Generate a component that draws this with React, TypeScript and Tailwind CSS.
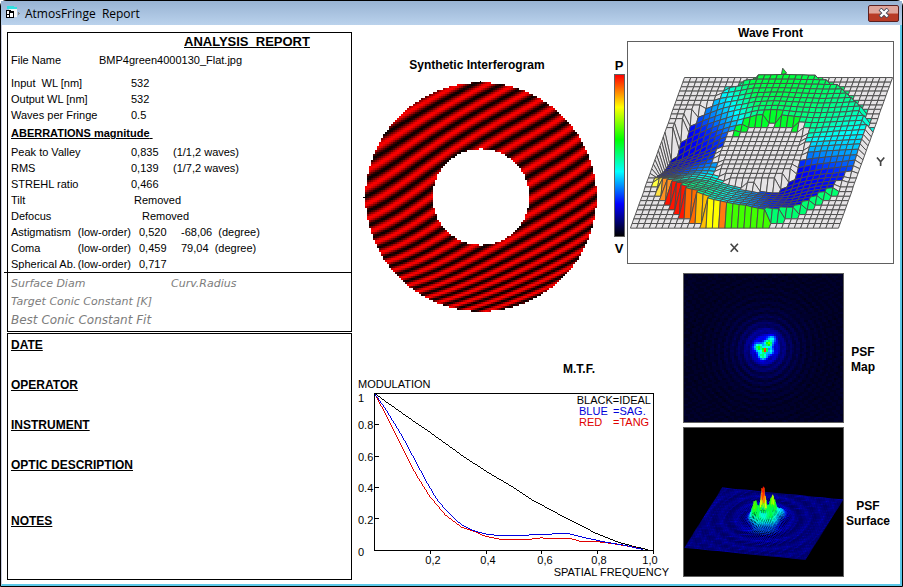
import type { ReactNode } from "react";

interface Row {
  label: string;
  order?: string;
  value: string;
  extra?: string;
  indent?: string;
}

const SETUP_ROWS: Row[] = [
  { label: "Input  WL [nm]", value: "532" },
  { label: "Output WL [nm]", value: "532" },
  { label: "Waves per Fringe", value: "0.5" },
];

const ABERRATION_ROWS: Row[] = [
  { label: "Peak to Valley", value: "0,835", extra: "(1/1,2 waves)" },
  { label: "RMS", value: "0,139", extra: "(1/7,2 waves)" },
  { label: "STREHL ratio", value: "0,466" },
  { label: "Tilt", value: "Removed", indent: "pl-[3px]" },
  { label: "Defocus", value: "Removed", indent: "pl-[11px]" },
  { label: "Astigmatism", order: "(low-order)", value: "0,520", extra: "-68,06  (degree)", indent: "pl-2" },
  { label: "Coma", order: "(low-order)", value: "0,459", extra: "79,04  (degree)", indent: "pl-2" },
  { label: "Spherical Ab.", order: "(low-order)", value: "0,717", indent: "pl-2" },
];

const NOTE_FIELDS = [
  { name: "DATE", height: "h-10" },
  { name: "OPERATOR", height: "h-10" },
  { name: "INSTRUMENT", height: "h-10" },
  { name: "OPTIC DESCRIPTION", height: "h-14" },
  { name: "NOTES", height: "h-10" },
];

type Rgb = [number, number, number];

// valley -> peak
const SCALE: [number, Rgb][] = [
  [0, [0, 0, 20]],
  [0.2, [0, 0, 255]],
  [0.4, [0, 255, 255]],
  [0.6, [0, 255, 0]],
  [0.8, [255, 255, 0]],
  [1, [255, 0, 0]],
];

function heat(v: number): string {
  const x = Math.min(1, Math.max(0, v));
  for (let i = 1; i < SCALE.length; i++) {
    const [b, cb] = SCALE[i];
    if (x <= b) {
      const [a, ca] = SCALE[i - 1];
      const k = (x - a) / (b - a);
      const mix = ca.map((c, j) => Math.round(c + (cb[j] - c) * k));
      return `rgb(${mix.join(",")})`;
    }
  }
  return "rgb(255,0,0)";
}

// Collects square pixels into one path per colour, merging runs on each row
function raster(cols: number, rows: number, size: number, color: (x: number, y: number) => string | null) {
  const paths = new Map<string, string>();
  for (let j = 0; j < rows; j++) {
    let start = 0;
    let current = color(0, j);
    for (let i = 1; i <= cols; i++) {
      const next = i < cols ? color(i, j) : null;
      if (next !== current || i === cols) {
        if (current) {
          const d = `M${start * size} ${j * size}h${(i - start) * size}v${size}h${(start - i) * size}z`;
          paths.set(current, (paths.get(current) ?? "") + d);
        }
        start = i;
        current = next;
      }
    }
  }
  return [...paths.entries()];
}

function fringeOrder(u: number, v: number) {
  const r2 = u * u + v * v;
  const tilt = 7.1 * v + 4.5 * u;
  const astigmatism = 0.6 * v * v + 0.4 * u * v - 0.6 * u * u;
  const coma = 1.5 * v * v * v + 0.4 * u * u * v;
  return tilt + astigmatism + coma + 0.6 * r2 * r2 + 0.03;
}

const FRINGES = raster(118, 117, 2, (i, j) => {
  const x = i * 2 + 1 - 118;
  const y = j * 2 + 1 - 117;
  const r = Math.hypot(x, y * 1.01);
  if (r > 115.5 || r < 48.5) return null;
  const level = 0.5 + 0.5 * Math.cos(2 * Math.PI * fringeOrder(x / 115.5, y / 114.5));
  return `rgb(${Math.round(Math.pow(level, 0.9) * 16) * 15 + 10},0,0)`;
});

function Interferogram() {
  return (
    <svg width="236" height="234" viewBox="0 0 236 234" shapeRendering="crispEdges" className="ml-2">
      {FRINGES.map(([fill, d]) => (
        <path key={fill} d={d} fill={fill} />
      ))}
      <path d="M117 1h1v2h-1zM0 117h3v1h-3z" fill="#000" />
    </svg>
  );
}

// angle, outer height, inner height, outer colour, inner colour
const PROFILE: [number, number, number, number, number][] = [
  [0, 20, 12, 0.36, 0.33],
  [30, 25, 10, 0.46, 0.48],
  [60, 20, 20, 0.52, 0.5],
  [90, 22, 28, 0.56, 0.5],
  [110, 22, 25, 0.55, 0.48],
  [130, 5, 10, 0.36, 0.4],
  [150, -43, 5, 0.19, 0.3],
  [165, -88, 0, 0.16, 0.25],
  [180, -62, -5, 0.16, 0.27],
  [200, 0, -10, 0.22, 0.37],
  [215, 50, -12, 0.42, 0.39],
  [230, 80, -14, 0.52, 0.39],
  [245, 85, -16, 0.5, 0.38],
  [260, 73, -18, 0.42, 0.36],
  [275, 61, -22, 0.34, 0.3],
  [290, 37, -32, 0.22, 0.24],
  [305, 20, -40, 0.19, 0.18],
  [320, 18, -30, 0.2, 0.17],
  [340, 4, -10, 0.22, 0.2],
  [360, 20, 12, 0.36, 0.33],
];

const WALLS: [number, string][] = [
  [206, "#ffff40"],
  [213, "#ffe040"],
  [220, "#ff9020"],
  [240, "#ff1400"],
  [248, "#ff6a00"],
  [254, "#ffc000"],
  [260, "#ffff00"],
  [264, "#ff7a10"],
  [288, "#40ff00"],
  [330, "#00ff70"],
];

const N = 33;

function surfaceAt(s: number, t: number) {
  const dx = s - 0.5;
  const dy = t - 0.5;
  const r = Math.hypot(dx, dy);
  const angle = ((Math.atan2(-dy, dx) * 180) / Math.PI + 360) % 360;
  const inside = r < 0.49 && r > 0.2;
  const i = Math.max(1, PROFILE.findIndex((p) => p[0] >= angle));
  const a = PROFILE[i - 1];
  const b = PROFILE[i];
  const k = (angle - a[0]) / (b[0] - a[0]);
  const w = Math.min(1, Math.max(0, (r - 0.2) / 0.29));
  const outer = a[1] + (b[1] - a[1]) * k;
  const inner = a[2] + (b[2] - a[2]) * k;
  const outerColor = a[3] + (b[3] - a[3]) * k;
  const innerColor = a[4] + (b[4] - a[4]) * k;
  const z = inside ? inner + (outer - inner) * w : 0;
  return { r, angle, inside, z, tone: innerColor + (outerColor - innerColor) * Math.pow(w, 0.6) };
}

function surfaceQuads() {
  const quads: { points: string; fill: string }[] = [];
  for (let j = 0; j < N; j++) {
    for (let i = 0; i < N; i++) {
      const corners = [
        [i, j],
        [i + 1, j],
        [i + 1, j + 1],
        [i, j + 1],
      ].map(([a, b]) => ({ s: a / N, t: b / N, ...surfaceAt(a / N, b / N) }));
      const points = corners
        .map((c) => `${Math.round(170 + 627 * c.s - 163 * c.t)},${Math.round(107 + 454 * c.t - c.z)}`)
        .join(" ");
      const on = corners.filter((c) => c.inside);
      const mid = surfaceAt((i + 0.5) / N, (j + 0.5) / N);
      let fill = "#e6e4e6";
      if (on.length === 4) {
        fill = heat(mid.tone);
      } else if (on.length > 0 && mid.r > 0.4) {
        if (mid.angle > 200 && mid.angle < 330) {
          fill = WALLS.find((w) => mid.angle <= w[0])?.[1] ?? fill;
        } else if (mid.angle < 125 && mid.angle > 15) {
          fill = heat(mid.tone);
        }
      } else if (on.length > 0 && mid.angle > 45 && mid.angle < 145) {
        fill = "#00ff2a";
      }
      quads.push({ points, fill });
    }
  }
  return quads;
}

const QUADS = surfaceQuads();

function WaveFront() {
  return (
    <svg viewBox="0 0 798 666" className="block h-[221px] w-full">
      <g stroke="#4a4a4a" strokeWidth="2.8" strokeLinejoin="round">
        <polygon points="462,98 466,79 478,94" fill="#00ff2a" />
        {QUADS.map((q, i) => (
          <polygon key={i} points={q.points} fill={q.fill} />
        ))}
      </g>
      <path d="M309 608l22 24m0-24l-22 24" stroke="#444" strokeWidth="5" />
      <path d="M750 348l11 13l11-13m-11 13v13" stroke="#444" strokeWidth="5" fill="none" />
    </svg>
  );
}

const LOBES = [
  { x: 0, y: 0, a: 0.75, s: 5 },
  { x: -20, y: -8, a: 0.42, s: 8 },
  { x: 11, y: -20, a: 0.45, s: 8 },
  { x: -7, y: 17, a: 0.34, s: 9 },
  { x: 22, y: -35, a: 0.2, s: 8 },
  { x: 19, y: 5, a: 0.2, s: 6 },
  { x: 0, y: -8, a: 0.16, s: 32 },
  { x: 0, y: -6, a: 0.05, s: 75 },
];

function psf(x: number, y: number) {
  let v = 0;
  for (const l of LOBES) {
    v += l.a * Math.exp(-((x - l.x) ** 2 + (y - l.y) ** 2) / (2 * l.s * l.s));
  }
  const r = Math.hypot(x, y);
  const ring = Math.cos(r / 3.2 + 0.8 * Math.sin(Math.atan2(y, x) * 2 + 0.6));
  const speckle = Math.sin(x * 0.21 + y * 0.05) * Math.sin(y * 0.33 - x * 0.04);
  return v + 0.014 + 0.04 * ring * Math.exp(-r / 90) + 0.008 * speckle;
}

const PSF_PIXELS = raster(80, 74, 2, (i, j) => {
  const v = psf((i * 2 + 1 - 81) * 3, (j * 2 + 1 - 76) * 3);
  return heat(Math.round(Math.max(0, v) * 100) / 100);
});

function PsfMap() {
  return (
    <svg viewBox="0 0 159 148" shapeRendering="crispEdges" className="block h-full w-full bg-[#000028]">
      {PSF_PIXELS.map(([fill, d]) => (
        <path key={fill} d={d} fill={fill} />
      ))}
    </svg>
  );
}

const PEAKS = [
  { x: 236, y: 68, s: 5, h: 34 },
  { x: 238, y: 74, s: 7, h: 60 },
  { x: 213, y: 79, s: 8, h: 50 },
  { x: 266, y: 70, s: 8, h: 54 },
  { x: 225, y: 98, s: 10, h: 22 },
  { x: 258, y: 92, s: 12, h: 28 },
  { x: 292, y: 66, s: 10, h: 20 },
  { x: 240, y: 84, s: 32, h: 18 },
];

function surfaceLines() {
  const groups = new Map<string, string>();
  const rows = 58;
  const cols = 120;
  const at = (i: number, j: number) => {
    const s = i / cols;
    const t = j / rows;
    const x = 114 + 363 * s - 112 * t;
    const y = 180 + 36 * s + 178 * t;
    let h = 0;
    for (const p of PEAKS) {
      h += p.h * Math.exp(-((x - p.x) ** 2) / (2 * p.s * p.s) - (y - 200 - p.y) ** 2 / (2 * p.s * p.s));
    }
    const r = Math.hypot((x - 240) * 0.8, (y - 276) * 1.5);
    const wave = Math.cos(r / 5.5) * Math.exp(-r / 110);
    const comb = i % 2 ? 1 : 0.62;
    return { x, y: y - h * comb - wave * 2, h, wave };
  };
  for (let j = 0; j <= rows; j++) {
    for (let i = 0; i < cols; i++) {
      const a = at(i, j);
      const b = at(i + 1, j);
      const level = 0.14 + 0.05 * a.wave + Math.max(a.h, b.h) * 0.0085 + ((i * 7 + j * 3) % 5) * 0.005;
      const color = heat(Math.round(level * 40) / 40);
      const d = `M${a.x.toFixed(1)} ${a.y.toFixed(1)}L${b.x.toFixed(1)} ${b.y.toFixed(1)}`;
      groups.set(color, (groups.get(color) ?? "") + d);
    }
  }
  return [...groups.entries()];
}

const SURFACE_LINES = surfaceLines();

function PsfSurface() {
  return (
    <svg viewBox="0 0 477 444" className="block h-full w-full bg-black">
      {SURFACE_LINES.map(([stroke, d]) => (
        <path key={stroke} d={d} stroke={stroke} strokeWidth="2.6" fill="none" />
      ))}
    </svg>
  );
}

const IDEAL = "75,115 105,138 200,205 240,232 340,304 410,350 490,397 540,431 640,485 740,536 800,560 850,574 895,584";
const SAG =
  "75,118 102,155 130,200 160,250 200,325 235,390 260,432 290,468 335,510 370,527 410,538 450,542 525,541 560,538 600,538 620,535 660,537 700,547 760,560 820,570 880,584";
const TANG =
  "75,118 100,165 130,225 160,285 200,362 240,425 285,479 335,517 370,528 400,542 450,553 555,552 570,549 660,550 690,559 740,560 790,566 850,576 880,584";

function MtfChart() {
  const yTicks = [
    ["1", 402],
    ["0.8", 429],
    ["0.6", 461],
    ["0.4", 492],
    ["0.2", 524],
    ["0", 556],
  ] as const;
  const xTicks = [
    ["0,2", 433],
    ["0,4", 488],
    ["0,6", 545],
    ["0,8", 599],
    ["1,0", 650],
  ] as const;
  return (
    <svg width="320" height="203" viewBox="355 377 320 203" className="block max-w-none text-[11px]">
      <text x="358" y="388">MODULATION</text>
      <rect x="374.5" y="393.5" width="279" height="157" fill="none" stroke="#000" />
      <path
        d="M374 424.5h5M374 456.5h5M374 487.5h5M374 518.5h5M430.5 550v4M486.5 550v4M541.5 550v4M597.5 550v4M653.5 550v4"
        stroke="#000"
      />
      {yTicks.map(([label, y]) => (
        <text key={label} x="358" y={y}>{label}</text>
      ))}
      {xTicks.map(([label, x]) => (
        <text key={label} x={x} y="564" textAnchor="middle">{label}</text>
      ))}
      <text x="669" y="576" textAnchor="end">SPATIAL FREQUENCY</text>
      <text x="651" y="404" textAnchor="end">BLACK=IDEAL</text>
      <g fill="#0000d8">
        <text x="579" y="415">BLUE</text>
        <text x="613" y="415">=SAG.</text>
      </g>
      <g fill="#e00000">
        <text x="579" y="426">RED</text>
        <text x="613" y="426">=TANG</text>
      </g>
      <g
        transform="translate(350 355) scale(0.3333)"
        fill="none"
        strokeWidth="3"
        shapeRendering="crispEdges"
      >
        <polyline points={IDEAL} stroke="#000" />
        <polyline points={TANG} stroke="#e00000" />
        <polyline points={SAG} stroke="#0000e0" />
      </g>
    </svg>
  );
}

function ReportRow({ label, order, value, extra, indent = "" }: Row) {
  return (
    <div className="flex h-4 items-center whitespace-pre">
      <dt className="flex w-[120px] shrink-0 justify-between">
        <span>{label}</span>
        {order && <span>{order}</span>}
      </dt>
      <dd className={`flex ${indent}`}>
        <span className={extra ? "w-[42px]" : ""}>{value}</span>
        {extra && <span>{extra}</span>}
      </dd>
    </div>
  );
}

function PsfPanel({ children, label, width }: { children: ReactNode; label: string; width: string }) {
  return (
    <figure className="flex items-center gap-px">
      <div className="h-[150px] w-[161px] shrink-0 border border-[#606060]">{children}</div>
      <figcaption className={`${width} pt-6 text-center text-xs leading-[15px] font-bold`}>
        PSF
        <br />
        {label}
      </figcaption>
    </figure>
  );
}

function TitleBar() {
  return (
    <header className="flex h-6 items-center bg-linear-to-b from-[#98b3d3] to-[#bad2ec] pl-1 pr-[3px]">
      <svg width="16" height="14" viewBox="0 0 16 14" shapeRendering="crispEdges">
        <path d="M4 1h8v10h-8z" fill="#f4f4f4" />
        <path d="M2 0h7v1h3v2h-10z" fill="#30e0e0" />
        <path d="M13 6h1v1h1v1h-1v1h-1z" fill="#888" />
        <path d="M1.5 4.5h4v7h-4z" fill="#fff" stroke="#000" />
        <path d="M4.5 5.5h4v6h-4z" fill="#fff" stroke="#000" />
        <path d="M1 4h5v1h-5zM4 5h5v2h-5zM2 8h2v1h-2z" fill="#000" />
      </svg>
      <h1 className="ml-1 flex-1 pt-px font-['Open_Sans','Noto_Sans',sans-serif] text-xs whitespace-pre">
        AtmosFringe  Report
      </h1>
      <button
        type="button"
        aria-label="Close"
        className="flex h-[17px] w-[31px] items-center justify-center rounded-xs border border-[#5a2020] bg-linear-to-b from-[#dfa59b] from-45% to-[#b83b26] to-55%"
      >
        <svg width="12" height="10" viewBox="0 0 12 10">
          <path d="M2 1l8 8m0-8l-8 8" stroke="#4a4a5a" strokeWidth="4" />
          <path d="M2.5 1.5l7 7m0-7l-7 7" stroke="#fff" strokeWidth="2.4" />
        </svg>
      </button>
    </header>
  );
}

export default function App() {
  return (
    <div className="flex min-h-screen flex-col rounded-t-md border border-black bg-white font-['Liberation_Sans',Arial,sans-serif] text-[11px] text-black">
      <TitleBar />
      <main className="flex flex-1 border-r-2 border-b-2 border-l border-[#5cc8e8] border-l-[#c8cce0] pl-[5px]">
        <div className="w-[345px] shrink-0 pt-[7px]">
          <section className="border border-black">
            <h2 className="h-[17px] pl-[176px] text-[13px] leading-[17px] font-bold whitespace-pre underline">
              ANALYSIS  REPORT
            </h2>
            <dl className="pl-[3px]">
              <div className="mb-[5px] flex h-5 items-center">
                <dt className="w-[88px]">File Name</dt>
                <dd>BMP4green4000130_Flat.jpg</dd>
              </div>
              {SETUP_ROWS.map((row) => (
                <ReportRow key={row.label} {...row} />
              ))}
            </dl>
            <h3 className="h-[21px] pl-[3px] leading-[21px] font-bold whitespace-pre underline">
              ABERRATIONS magnitude{" "}
            </h3>
            <dl className="pl-[3px]">
              {ABERRATION_ROWS.map((row) => (
                <ReportRow key={row.label} {...row} />
              ))}
            </dl>
            <div className="-ml-1 border-t border-black pt-px pl-[7px] font-['DejaVu_Sans',Verdana,sans-serif] text-[#7c7c7c] italic">
              <div className="flex h-5 items-center">
                <span className="w-[160px]">Surface Diam</span>
                <span>Curv.Radius</span>
              </div>
              <p className="leading-4">Target Conic Constant [K]</p>
              <p className="h-[21px] text-xs leading-[21px]">Best Conic Constant Fit</p>
            </div>
          </section>
          <section className="mt-px h-[247px] border border-black pt-[3px] pl-[3px]">
            {NOTE_FIELDS.map((field) => (
              <h3 key={field.name} className={`${field.height} text-xs leading-4 font-bold underline`}>
                {field.name}
              </h3>
            ))}
          </section>
        </div>

        <div className="w-[275px] shrink-0 pt-8 pl-[3px]">
          <div className="flex">
            <section className="w-[244px]">
              <h2 className="mb-[7px] text-center text-xs leading-4 font-bold">Synthetic Interferogram</h2>
              <Interferogram />
            </section>
            <div className="ml-3 flex w-4 flex-col items-center pt-px text-[13px] leading-4 font-bold">
              P
              <div className="h-[163px] w-[11px] border border-[#606060] bg-[linear-gradient(to_bottom,red,yellow_20%,lime_40%,cyan_60%,blue_80%,black)]" />
              <span className="mt-1">V</span>
            </div>
          </div>
          <section className="mt-[47px]">
            <h2 className="pl-[208px] text-xs leading-4 font-bold">M.T.F.</h2>
            <MtfChart />
          </section>
        </div>

        <div className="min-w-[267px]">
          <section className="w-[267px]">
            <h2 className="pl-5 text-center text-xs leading-4 font-bold">Wave Front</h2>
            <div className="border border-[#606060]">
              <WaveFront />
            </div>
          </section>
          <div className="mt-[9px] ml-14 flex flex-col gap-1">
            <PsfPanel label="Map" width="w-9">
              <PsfMap />
            </PsfPanel>
            <PsfPanel label="Surface" width="w-[46px]">
              <PsfSurface />
            </PsfPanel>
          </div>
        </div>
      </main>
    </div>
  );
}
